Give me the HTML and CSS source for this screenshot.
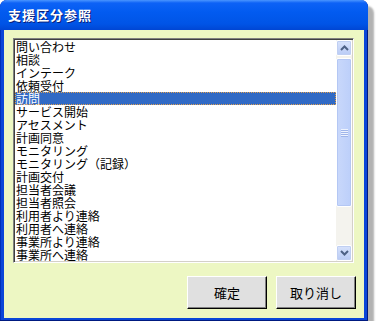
FILE: index.html
```html
<!DOCTYPE html>
<html lang="ja">
<head>
    <meta charset="UTF-8">
    <title>支援区分参照</title>
    <link rel="stylesheet" href="styles.css">
</head>
<body>

<div class="window">
    <div class="titlebar">
        <span class="title">支援区分参照</span>
    </div>
    <div class="client">
        <div class="listbox">
            <ul class="items">
                <li>問い合わせ</li>
                <li>相談</li>
                <li>インテーク</li>
                <li>依頼受付</li>
                <li class="selected">訪問</li>
                <li>サービス開始</li>
                <li>アセスメント</li>
                <li>計画同意</li>
                <li>モニタリング</li>
                <li>モニタリング（記録）</li>
                <li>計画交付</li>
                <li>担当者会議</li>
                <li>担当者照会</li>
                <li>利用者より連絡</li>
                <li>利用者へ連絡</li>
                <li>事業所より連絡</li>
                <li>事業所へ連絡</li>
            </ul>
            <!-- スクロールバー -->
            <div class="scrollbar">
                <div class="sb-btn">
                    <svg width="9" height="6" viewBox="0 0 9 6"><path d="M1 5 L4.5 1.5 L8 5" fill="none" stroke="#4d6185" stroke-width="2"/></svg>
                </div>
                <div class="sb-track">
                    <div class="sb-thumb">
                        <span class="grip"></span>
                        <span class="grip"></span>
                        <span class="grip"></span>
                        <span class="grip"></span>
                    </div>
                </div>
                <div class="sb-btn">
                    <svg width="9" height="6" viewBox="0 0 9 6"><path d="M1 1 L4.5 4.5 L8 1" fill="none" stroke="#4d6185" stroke-width="2"/></svg>
                </div>
            </div>
        </div>
        <div class="buttons">
            <button class="btn">確定</button>
            <button class="btn">取り消し</button>
        </div>
    </div>
</div>

</body>
</html>
```

FILE: styles.css
```css
body {
    margin: 0;
    background: #ffffff;
    font-family: "Noto Sans CJK JP", sans-serif;
}
.window {
    width: 368px;
    height: 321px;
    display: flex;
    flex-direction: column;
    background: #0a46d8;
    border-radius: 7px 7px 0 0;
    box-shadow: 6px 6px 2px rgba(0, 0, 0, 0.3), inset -1px -1px 0 #001a80, inset 1px 0 0 #0030b8;
    box-sizing: border-box;
    padding: 0 4px 3px 4px;
}
.titlebar {
    height: 30px;
    margin: 0 -4px;
    padding-left: 8px;
    display: flex;
    align-items: center;
    border-radius: 7px 7px 0 0;
    background: linear-gradient(#4a95ff 0, #0d62f6 3px, #025bf0 40%, #0054e6 80%, #0046d4 100%);
}
.title {
    color: #ffffff;
    font-size: 13px;
    font-weight: bold;
    letter-spacing: 1px;
    text-shadow: 1px 1px 0 #0a1e78;
    margin-top: -1px;
}
.client {
    flex: 1;
    background: #edf7c3;
    padding: 8px 10px 9px 9px;
    display: flex;
    flex-direction: column;
}
.listbox {
    height: 225px;
    box-sizing: border-box;
    display: flex;
    background: #ffffff;
    border-top: 1px solid #808080;
    border-left: 1px solid #808080;
    border-right: 1px solid #ffffff;
    border-bottom: 1px solid #ffffff;
    box-shadow: inset 1px 1px 0 #404040, inset -1px -1px 0 #d4d0c8;
    padding: 1px;
}
.items {
    flex: 1;
    list-style: none;
    margin: 0;
    padding: 0;
    font-size: 12px;
    line-height: 13px;
    color: #000000;
}
.items li {
    height: 13px;
    padding-left: 1px;
    white-space: nowrap;
}
.items li.selected {
    background: #316ac5;
    color: #ffffff;
    outline: 1px dotted #e0a050;
    outline-offset: -1px;
}
.scrollbar {
    width: 16px;
    display: flex;
    flex-direction: column;
    background: #f4f3ee;
}
.sb-btn {
    height: 16px;
    box-sizing: border-box;
    display: flex;
    align-items: center;
    justify-content: center;
    border: 1px solid #ffffff;
    border-radius: 2px;
    background: linear-gradient(#d8e3fc, #b9cbf5);
    box-shadow: inset 0 0 0 1px #c0cff2;
}
.sb-track {
    flex: 1;
    padding: 2px 0;
    display: flex;
    flex-direction: column;
}
.sb-thumb {
    height: 149px;
    box-sizing: border-box;
    border: 1px solid #ffffff;
    border-radius: 2px;
    background: linear-gradient(90deg, #c9d8fb, #bccffa);
    box-shadow: inset 0 0 0 1px #b4c7f4;
    display: flex;
    flex-direction: column;
    align-items: center;
    justify-content: center;
    gap: 1px;
}
.grip {
    width: 7px;
    height: 1px;
    background: #eef3fe;
    box-shadow: 0 1px 0 #9fb5ea;
}
.buttons {
    margin-top: 13px;
    margin-right: -2px;
    display: flex;
    justify-content: flex-end;
    gap: 9px;
}
.btn {
    width: 80px;
    height: 33px;
    font-family: "Noto Sans CJK JP", sans-serif;
    font-size: 13px;
    color: #000000;
    background: #e0e0e0;
    border-top: 1px solid #ffffff;
    border-left: 1px solid #ffffff;
    border-right: 1px solid #000000;
    border-bottom: 1px solid #000000;
    box-shadow: inset -1px -1px 0 #808080;
    padding: 0;
}
```
